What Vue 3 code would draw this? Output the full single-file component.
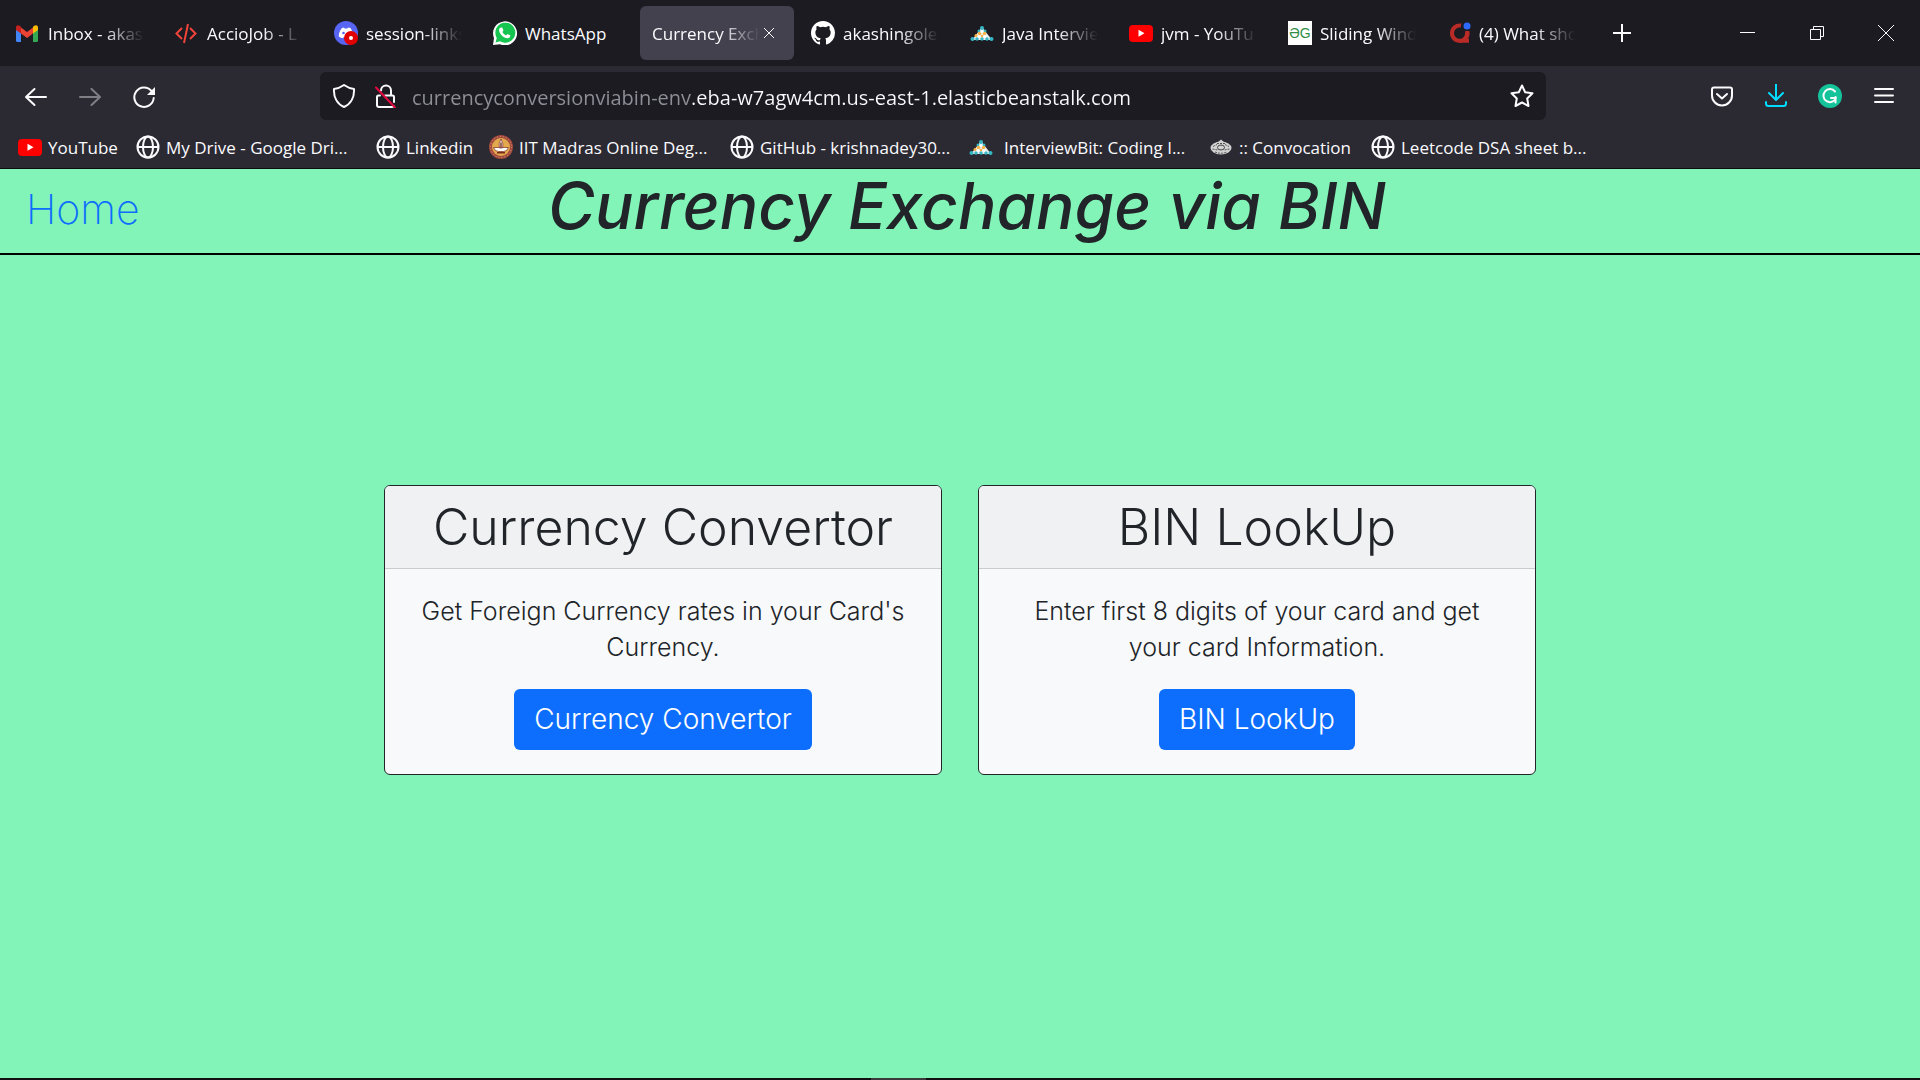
<script setup>
const tabs = [
  { icon: 'gmail', title: 'Inbox - akas' },
  { icon: 'code', title: 'AccioJob - L' },
  { icon: 'discord', title: 'session-links' },
  { icon: 'whatsapp', title: 'WhatsApp', whole: true },
  { icon: '', title: 'Currency Exch', active: true },
  { icon: 'github', title: 'akashingole' },
  { icon: 'pyramid', title: 'Java Intervie' },
  { icon: 'youtube', title: 'jvm - YouTu' },
  { icon: 'gfg', title: 'Sliding Wind' },
  { icon: 'quora', title: '(4) What sho' },
]

const bookmarks = [
  { icon: 'youtube', title: 'YouTube', width: 118 },
  { icon: 'globe', title: 'My Drive - Google Dri...', width: 240 },
  { icon: 'globe', title: 'Linkedin', width: 113 },
  { icon: 'lamp', title: 'IIT Madras Online Deg...', width: 241 },
  { icon: 'globe', title: 'GitHub - krishnadey30...', width: 239 },
  { icon: 'pyramid', title: 'InterviewBit: Coding I...', width: 240, wide: true },
  { icon: 'crest', title: ':: Convocation', width: 162 },
  { icon: 'globe', title: 'Leetcode DSA sheet b...', width: 240 },
]

const cards = [
  {
    title: 'Currency Convertor',
    text: "Get Foreign Currency rates in your Card's Currency.",
  },
  {
    title: 'BIN LookUp',
    text: 'Enter first 8 digits of your card and get your card Information.',
  },
]
</script>

<template>
  <div class="window">
    <svg class="defs" aria-hidden="true">
      <symbol id="gmail" viewBox="0 0 24 24">
        <path fill="#4285f4" d="M0 8v11.500q0 1.500 1.500 1.500H5V11.500z" />
        <path fill="#34a853" d="M22 8v11.500q0 1.500-1.500 1.500H17V11.500z" />
        <path fill="#ea4335" d="M5 6.500l6 4.500 6-4.500v6L11 17l-6-4.500z" />
        <path fill="#c5221f" d="M0 8V6.500C0 4 2.500 3.800 4 5l1 .8v6.700L0 9z" />
        <path fill="#fbbc04" d="M22 8V6.500C22 4 19.500 3.800 18 5l-1 .8v6.700L22 9z" />
      </symbol>
      <symbol id="code" viewBox="0 0 24 24">
        <path fill="none" stroke="#f0443a" stroke-width="2" d="M7 7L1.500 12.500 7 18M15 7l5.500 5.500L15 18M13 3L9 22" />
      </symbol>
      <symbol id="discord" viewBox="0 0 24 24">
        <circle cx="12" cy="12" r="12" fill="#5865f2" />
        <path fill="#fff" d="M8 7l2-.6.6 1h2.800l.6-1 2.500.6c2 3 2.500 6 2.300 9-2 1.500-3 1.400-3.300 1.200l-.7-1.200h-5l-.8 1.200C7 17 5.500 16 4.800 15.500 4.700 12 6 9 8 7z" />
        <circle cx="9.500" cy="12" r="1.300" fill="#5865f2" />
        <circle cx="17" cy="17" r="7" fill="#e00000" />
        <circle cx="17" cy="17" r="2" fill="#fff" />
      </symbol>
      <symbol id="whatsapp" viewBox="0 0 24 24">
        <path fill="#fff" d="M0 24l1-7A12 12 0 1 1 7 23.200z" />
        <path fill="#16c450" d="M2.500 21.500l1.300-4.600a10 10 0 1 1 3.300 3.300z" />
        <path fill="#fff" d="M8 6.500h1.200l1.300 2.900-1.100 1.500c.8 1.600 2 2.700 3.700 3.500l1.300-1.500 2.900 1.400c.1 2.100-1.500 3-3 3-4.300-.6-8.500-5-8.200-8.700.1-.9.900-1.900 1.900-2.100z" />
      </symbol>
      <symbol id="github" viewBox="0 0 16 16">
        <path fill="#fff" d="M8 0C3.580 0 0 3.580 0 8c0 3.540 2.290 6.530 5.470 7.590.4.070.55-.17.55-.38 0-.19-.01-.82-.01-1.490-2.010.37-2.530-.49-2.690-.94-.09-.23-.48-.94-.82-1.130-.28-.15-.68-.52-.01-.53.63-.01 1.080.58 1.230.82.72 1.210 1.870.87 2.330.66.07-.52.28-.87.51-1.070-1.780-.2-3.640-.89-3.640-3.950 0-.87.31-1.590.82-2.150-.08-.2-.36-1.020.08-2.120 0 0 .67-.21 2.200.82a7.600 7.600 0 0 1 4 0c1.530-1.040 2.200-.82 2.200-.82.44 1.100.16 1.920.08 2.120.51.56.82 1.270.82 2.150 0 3.070-1.870 3.750-3.650 3.950.29.25.54.73.54 1.480 0 1.070-.01 1.930-.01 2.200 0 .21.15.46.55.38A8.010 8.010 0 0 0 16 8c0-4.420-3.580-8-8-8z" />
      </symbol>
      <symbol id="pyramid" viewBox="0 0 24 24">
        <path fill="#e8eef0" d="M12 6l10 13H2z" />
        <g fill="#35b8c4">
          <circle cx="12" cy="7" r="2" /><circle cx="9" cy="10" r="1.500" /><circle cx="15" cy="10" r="1.500" />
          <circle cx="2.500" cy="18" r="2" /><circle cx="7" cy="18" r="1.700" /><circle cx="12" cy="18" r="1.700" /><circle cx="17" cy="18" r="1.700" /><circle cx="21.500" cy="18" r="2" />
        </g>
        <g fill="#fbb040">
          <circle cx="9.500" cy="12.500" r="1.700" /><circle cx="14.500" cy="12.500" r="1.700" /><circle cx="6" cy="14.500" r="1.500" /><circle cx="12" cy="15" r="1.300" />
        </g>
        <g fill="#fff">
          <circle cx="12" cy="10.500" r="1.500" /><circle cx="9" cy="15.500" r="1.500" /><circle cx="15" cy="15.500" r="1.500" />
        </g>
      </symbol>
      <symbol id="youtube" viewBox="0 0 24 24">
        <rect y="4" width="24" height="17" rx="4" fill="#f00" />
        <path fill="#fff" d="M9.500 8.800v7l6-3.500z" />
      </symbol>
      <symbol id="quora" viewBox="0 0 24 24">
        <path fill="none" stroke="#b92b27" stroke-width="4" d="M14 4.500A7.800 7.800 0 1 0 20.500 11M12 19.700h10" />
        <path fill="none" stroke="#b92b27" stroke-width="4" d="M20.300 10c0 4-.8 6.500-3 8.500" />
        <circle cx="20" cy="5" r="3.500" fill="#2e69ff" />
      </symbol>
      <symbol id="globe" viewBox="0 0 24 24">
        <g fill="none" stroke="#fbfbfe" stroke-width="2">
          <circle cx="12" cy="12" r="10.500" />
          <ellipse cx="12" cy="12" rx="5" ry="10.500" />
          <path d="M2 12h20" />
        </g>
      </symbol>
      <symbol id="lamp" viewBox="0 0 24 24">
        <circle cx="12" cy="12" r="12" fill="#a34a3c" />
        <circle cx="12" cy="12" r="10.500" fill="none" stroke="#d39a84" stroke-dasharray="1 2" />
        <circle cx="12" cy="12" r="9" fill="#e3a94d" />
        <path fill="#fff" stroke="#7a2a1c" stroke-width=".7" d="M4.500 12.500h5.500q2 0 2-2 0 2 2 2h5.500q-1.500 4-5 4h-5q-3.500 0-5-4z" />
        <path fill="#fff" stroke="#7a2a1c" stroke-width=".7" d="M12 4q3 5 1.500 9h-3Q9 9 12 4z" />
        <path fill="#7a2a1c" d="M11.300 7.500h1.400V13h-1.400zM8 17h8v1.500H8z" />
      </symbol>
      <symbol id="crest" viewBox="0 0 24 24">
        <ellipse cx="12" cy="13" rx="10.500" ry="6.500" fill="#d2d2d2" />
        <path fill="#d2d2d2" d="M8 8l4-3.500L16 8z" />
        <ellipse cx="12" cy="12.500" rx="3.500" ry="2.500" fill="none" stroke="#444" />
        <path fill="none" stroke="#555" stroke-dasharray="2 1" d="M4 11.500l4-2M16 9.500l4 2M3.500 14l5 1M20.500 14l-5 1M6 17q6 2.500 12 0M8 8.500h8" />
      </symbol>
    </svg>

    <header class="browser">
      <div class="strip">
        <div class="tabs" role="tablist">
          <div
            v-for="tab in tabs"
            :key="tab.title"
            class="tab"
            :class="{ active: tab.active, whole: tab.whole }"
            role="tab"
          >
            <span v-if="tab.icon === 'gfg'" class="gfg">ƏG</span>
            <svg v-else-if="tab.icon" class="icon"><use :href="'#' + tab.icon" /></svg>
            <span class="tab-title">{{ tab.title }}</span>
            <button v-if="tab.active" class="tab-close" aria-label="Close tab">
              <svg viewBox="0 0 12 12"><path d="M1 1l10 10M11 1L1 11" /></svg>
            </button>
          </div>
        </div>
        <button class="new-tab" aria-label="New tab">
          <svg width="18" height="18"><path d="M9 0v18M0 9h18" stroke-width="2" /></svg>
        </button>
        <div class="controls">
          <button aria-label="Minimize"><svg width="16" height="16"><path d="M0 7.500h15" /></svg></button>
          <button aria-label="Restore">
            <svg width="16" height="16"><path d="M1.500 4.500h10v10h-10zM4.500 4.500v-3h10v10h-3" /></svg>
          </button>
          <button aria-label="Close"><svg width="16" height="16"><path d="M0 0l16 16M16 0L0 16" /></svg></button>
        </div>
      </div>

      <div class="toolbar">
        <nav class="history">
          <button aria-label="Back">
            <svg class="icon" viewBox="0 0 24 24"><path d="M22 13H2M10.500 5L2 13l8.500 8" /></svg>
          </button>
          <button aria-label="Forward" disabled>
            <svg class="icon" viewBox="0 0 24 24"><path d="M2 13h20M13.500 5L22 13l-8.500 8" /></svg>
          </button>
          <button aria-label="Reload">
            <svg class="icon" viewBox="0 0 24 24">
              <path d="M19.500 7A9.700 9.700 0 1 0 21.700 14" />
              <path class="solid" d="M23 3v8h-8z" />
            </svg>
          </button>
        </nav>
        <div class="urlbar">
          <svg class="icon" viewBox="0 0 24 24"><path d="M12 1q5 3.500 10 4c.5 8-3 15-10 18C5 20 1.500 13 2 5q5-.5 10-4z" /></svg>
          <svg class="icon lock" viewBox="0 0 24 24">
            <path d="M7 6.500a5 5 0 0 1 10 0V11M6 11.500H4.500q-1.500 0-1.500 1.500v8q0 2 2 2h13q1.500 0 1.500-1M11 11.500h7.500q1.500 0 1.500 1.500v5" />
            <path class="slash" d="M2 3.500l19 20" />
          </svg>
          <input
            class="address"
            type="text"
            aria-label="Address"
            value="currencyconversionviabin-env.eba-w7agw4cm.us-east-1.elasticbeanstalk.com"
          />
          <button class="star" aria-label="Bookmark this page">
            <svg class="icon" viewBox="0 0 24 24"><path d="M12 1.500l3.200 6.800 7.300 1-5.300 5.200 1.300 7.500-6.500-3.500L5.500 22l1.300-7.500L1.500 9.300l7.300-1z" /></svg>
          </button>
        </div>
        <div class="tools">
          <button aria-label="Pocket">
            <svg class="icon" viewBox="0 0 24 24"><path d="M4 3.500h16q2 0 2 2v6a10 10 0 0 1-20 0v-6q0-2 2-2zM7 10l5 4.500 5-4.500" /></svg>
          </button>
          <button class="download" aria-label="Downloads">
            <svg class="icon" viewBox="0 0 24 24"><path d="M12 0v15M5 9l7 7 7-7M2 18v1.500Q2 22 4.500 22h15q2.500 0 2.500-2.500V18" /></svg>
          </button>
          <button aria-label="Grammarly">
            <svg class="icon" viewBox="0 0 24 24">
              <circle class="disc" cx="12" cy="12" r="12" />
              <path d="M17 7.500a6.500 6.500 0 1 0 1 6.500h-5M17.500 13v5.500" />
            </svg>
          </button>
          <button aria-label="Menu">
            <svg class="icon" viewBox="0 0 24 24"><path d="M3 5h18M3 11.500h18M3 18h18" /></svg>
          </button>
        </div>
      </div>

      <nav class="bookmarks">
        <a
          v-for="mark in bookmarks"
          :key="mark.title"
          href="#"
          :class="{ wide: mark.wide }"
          :style="{ width: mark.width + 'px' }"
        >
          <svg class="icon"><use :href="'#' + mark.icon" /></svg>{{ mark.title }}
        </a>
      </nav>
    </header>

    <main class="page">
      <div class="banner">
        <a class="home" href="#">Home</a>
        <h1>Currency Exchange via BIN</h1>
      </div>
      <div class="stage">
        <div class="cards">
          <section v-for="card in cards" :key="card.title" class="card">
            <h2>{{ card.title }}</h2>
            <div class="card-body">
              <p>{{ card.text }}</p>
              <a class="action" href="#">{{ card.title }}</a>
            </div>
          </section>
        </div>
      </div>
    </main>
    <footer class="taskbar"><span></span></footer>
  </div>
</template>

<style>
body {
  margin: 0;
  background: #82f4b7;
}
</style>

<style scoped>
* {
  box-sizing: border-box;
}
.window {
  display: flex;
  flex-direction: column;
  min-height: 100vh;
  font-family: "Open Sans", "Noto Sans", sans-serif;
  font-size: 17px;
}
.defs {
  position: absolute;
  width: 0;
  height: 0;
}
.icon {
  width: 24px;
  height: 24px;
  flex: none;
}
button {
  display: flex;
  align-items: center;
  justify-content: center;
  padding: 0;
  border: 0;
  background: none;
  color: inherit;
}
button path,
.urlbar path {
  fill: none;
  stroke: currentColor;
  stroke-width: 2;
  stroke-linecap: round;
  stroke-linejoin: round;
}
.browser {
  background: #2b2a33;
  color: #fbfbfe;
  border-bottom: 1px solid #0c0c0d;
}
.strip {
  display: flex;
  align-items: center;
  height: 66px;
  padding-left: 4px;
  background: #1c1b22;
}
.tabs {
  display: flex;
  gap: 5px;
}
.tab {
  display: flex;
  align-items: center;
  gap: 8px;
  width: 154px;
  height: 54px;
  padding: 0 8px 0 12px;
  border-radius: 6px;
}
.tab.active {
  gap: 0;
  padding-right: 16px;
  background: #42414d;
}
.tab-title {
  flex: 1;
  min-width: 0;
  overflow: hidden;
  white-space: nowrap;
  mask-image: linear-gradient(to left, transparent 6px, #000 46px);
}
.active .tab-title {
  mask-image: linear-gradient(to left, transparent, #000 40px);
}
.whole .tab-title {
  mask-image: none;
}
.tab-close {
  width: 18px;
  height: 24px;
}
.tab-close svg {
  width: 12px;
  height: 12px;
}
.tab-close path,
.controls path {
  stroke-width: 1;
  stroke-linecap: butt;
  stroke-linejoin: miter;
}
.gfg {
  width: 24px;
  flex: none;
  background: #fff;
  color: #2f8d46;
  font: 14px/24px "Liberation Sans", sans-serif;
  text-align: center;
}
.new-tab {
  width: 66px;
  height: 54px;
}
.new-tab path {
  stroke-linecap: butt;
}
.controls {
  display: flex;
  margin-left: auto;
}
.controls button {
  width: 69px;
  height: 66px;
}
.toolbar {
  display: flex;
  align-items: center;
  padding-top: 6px;
}
.history {
  display: flex;
  width: 320px;
  padding-left: 9px;
}
.history button,
.tools button {
  width: 54px;
  height: 48px;
}
.history button:disabled {
  opacity: 0.4;
}
path.solid {
  fill: currentColor;
  stroke: none;
}
.urlbar {
  display: flex;
  align-items: center;
  flex: 1;
  height: 48px;
  padding: 0 12px;
  gap: 18px;
  border-radius: 6px;
  background: #1c1b22;
}
.urlbar path.slash {
  stroke: #e5093f;
}
.address {
  flex: 1;
  height: 48px;
  margin-left: -4px;
  padding: 2px 0 0;
  border: 0;
  background: linear-gradient(to right, #8f8f98 280px, #fbfbfe 280px) text;
  color: transparent;
  font: 20px "Open Sans", "Noto Sans", sans-serif;
}
.tools {
  display: flex;
  width: 374px;
  padding-right: 9px;
  justify-content: flex-end;
}
.download {
  color: #00ddff;
}
.disc {
  fill: #15c39a;
}
.bookmarks {
  display: flex;
  height: 48px;
  padding: 6px 0 0 18px;
}
.bookmarks a {
  display: flex;
  align-items: center;
  gap: 6px;
  color: inherit;
  text-decoration: none;
  white-space: nowrap;
}
.bookmarks a.wide {
  gap: 11px;
}
.page {
  display: flex;
  flex-direction: column;
  flex: 1;
  background: #82f4b7;
  color: #212529;
  font-family: Inter, "Open Sans", sans-serif;
  font-weight: 300;
}
.banner {
  display: grid;
  grid-template-columns: 134px 1fr 120px;
  align-items: center;
  height: 86px;
  border-bottom: 2px solid #000;
}
.home {
  padding: 0 0 4px 26px;
  color: #0d6efd;
  font-size: 41px;
  font-weight: 200;
  text-decoration: none;
}
h1 {
  margin: 0;
  padding-bottom: 10px;
  font-size: 64px;
  font-style: italic;
  font-weight: 500;
  line-height: 72px;
  text-align: center;
  white-space: nowrap;
}
.stage {
  display: flex;
  flex: 1;
  align-items: center;
  justify-content: center;
  padding-bottom: 74px;
}
.cards {
  display: flex;
  gap: 36px;
  width: 60%;
}
.card {
  flex: 1;
  overflow: hidden;
  border: 1px solid #212529;
  border-radius: 6px;
  background: #f8f9fa;
  text-align: center;
}
h2 {
  margin: 0;
  padding: 12px 0;
  border-bottom: 1px solid #cbccce;
  background: #eff1f2;
  font-size: 50px;
  font-weight: 300;
  line-height: 58px;
}
.card-body {
  display: flex;
  flex-direction: column;
  align-items: center;
  padding: 24px 32px;
}
p {
  margin: 0 0 24px;
  font-size: 25px;
  line-height: 36px;
}
.action {
  padding: 10px 20px;
  border-radius: 6px;
  background: #0d6efd;
  color: #fff;
  font-size: 28px;
  line-height: 41px;
  text-decoration: none;
}
.taskbar {
  height: 2px;
  background: #101010;
}
.taskbar span {
  display: block;
  width: 55px;
  height: 2px;
  margin-left: 871px;
  background: #3a3a3a;
}
</style>
